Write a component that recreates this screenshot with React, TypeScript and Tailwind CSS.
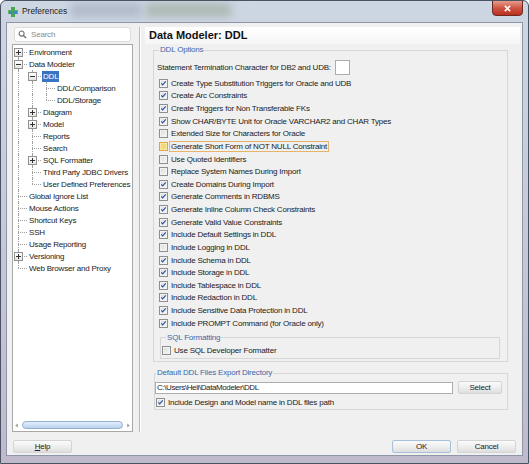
import React from 'react'

type Cell = 'pass' | 'none'
interface TreeRow {
  label: string
  anc: Cell[]
  last?: boolean
  first?: boolean
  exp?: '+' | '-'
  sel?: boolean
}

const tree: TreeRow[] = [
  { label: 'Environment', anc: [], exp: '+', first: true },
  { label: 'Data Modeler', anc: [], exp: '-' },
  { label: 'DDL', anc: ['pass'], exp: '-', sel: true },
  { label: 'DDL/Comparison', anc: ['pass', 'pass'] },
  { label: 'DDL/Storage', anc: ['pass', 'pass'], last: true },
  { label: 'Diagram', anc: ['pass'], exp: '+' },
  { label: 'Model', anc: ['pass'], exp: '+' },
  { label: 'Reports', anc: ['pass'] },
  { label: 'Search', anc: ['pass'] },
  { label: 'SQL Formatter', anc: ['pass'], exp: '+' },
  { label: 'Third Party JDBC Drivers', anc: ['pass'] },
  { label: 'User Defined Preferences', anc: ['pass'], last: true },
  { label: 'Global Ignore List', anc: [] },
  { label: 'Mouse Actions', anc: [] },
  { label: 'Shortcut Keys', anc: [] },
  { label: 'SSH', anc: [] },
  { label: 'Usage Reporting', anc: [] },
  { label: 'Versioning', anc: [], exp: '+' },
  { label: 'Web Browser and Proxy', anc: [], last: true },
]

const options: { label: string; checked?: boolean; focus?: boolean }[] = [
  { label: 'Create Type Substitution Triggers for Oracle and UDB', checked: true },
  { label: 'Create Arc Constraints', checked: true },
  { label: 'Create Triggers for Non Transferable FKs', checked: true },
  { label: 'Show CHAR/BYTE Unit for Oracle VARCHAR2 and CHAR Types', checked: true },
  { label: 'Extended Size for Characters for Oracle' },
  { label: 'Generate Short Form of NOT NULL Constraint', focus: true },
  { label: 'Use Quoted Identifiers' },
  { label: 'Replace System Names During Import' },
  { label: 'Create Domains During Import', checked: true },
  { label: 'Generate Comments in RDBMS', checked: true },
  { label: 'Generate Inline Column Check Constraints', checked: true },
  { label: 'Generate Valid Value Constraints', checked: true },
  { label: 'Include Default Settings in DDL', checked: true },
  { label: 'Include Logging in DDL' },
  { label: 'Include Schema in DDL', checked: true },
  { label: 'Include Storage in DDL', checked: true },
  { label: 'Include Tablespace in DDL', checked: true },
  { label: 'Include Redaction in DDL', checked: true },
  { label: 'Include Sensitive Data Protection in DDL', checked: true },
  { label: 'Include PROMPT Command (for Oracle only)', checked: true },
]

function Box({ checked, focus }: { checked?: boolean; focus?: boolean }) {
  return (
    <span
      className={
        focus
          ? 'flex h-[9px] w-[9px] shrink-0 items-center justify-center border border-[#e0a53e] bg-[#f7d676] shadow-[inset_0_0_0_1px_#fbe7a8]'
          : 'flex h-[9px] w-[9px] shrink-0 items-center justify-center border border-[#8e8f8f] bg-gradient-to-br from-[#d9d9d9] to-[#fafafa] shadow-[inset_0_0_0_1px_#f2f2f2]'
      }
    >
      {checked && (
        <svg viewBox="0 0 9 9" className="h-[7px] w-[7px]">
          <path d="M1.6 4.3 L3.5 6.3 L7.4 1.9" fill="none" stroke="#2a52a0" strokeWidth="1.5" />
        </svg>
      )}
    </span>
  )
}

function Check({ label, checked, focus }: { label: string; checked?: boolean; focus?: boolean }) {
  return (
    <div className="flex h-[12.63px] items-center gap-[1px]">
      <Box checked={checked} focus={focus} />
      <span
        className={
          focus
            ? 'border border-[#e6b46a] px-[1px] leading-[9px] whitespace-nowrap'
            : 'border border-transparent px-[1px] leading-[9px] whitespace-nowrap'
        }
      >
        {label}
      </span>
    </div>
  )
}

function Button({ label, def, className }: { label: React.ReactNode; def?: boolean; className: string }) {
  return (
    <div
      className={`flex h-[13px] items-center justify-center rounded-[2px] border bg-gradient-to-b from-[#fbfbfb] via-[#efefef] to-[#dedede] text-[#222] ${
        def ? 'border-[#a9c0da]' : 'border-[#d4d4d4]'
      } ${className}`}
    >
      {label}
    </div>
  )
}

function TreeLine({ row }: { row: TreeRow }) {
  return (
    <div className="flex h-[12px] items-center">
      {row.anc.map((c, i) => (
        <span key={i} className="relative h-full w-[14px] shrink-0">
          {c === 'pass' && <span className="absolute left-[5px] top-0 h-full border-l border-dotted border-[#a0a0a0]" />}
        </span>
      ))}
      <span className="relative h-full w-[14px] shrink-0">
        <span
          className={`absolute left-[5px] border-l border-dotted border-[#a0a0a0] ${
            row.first ? 'top-[6px] h-[6px]' : row.last ? 'top-0 h-[6px]' : 'top-0 h-full'
          }`}
        />
        <span className="absolute left-[5px] top-[6px] w-[9px] border-t border-dotted border-[#a0a0a0]" />
        {row.exp && (
          <span className="absolute left-[1px] top-[2px] flex h-[9px] w-[9px] items-center justify-center border border-[#919191] bg-gradient-to-b from-white to-[#e4e4e4]">
            <span className="absolute h-[1px] w-[5px] bg-[#333]" />
            {row.exp === '+' && <span className="absolute h-[5px] w-[1px] bg-[#333]" />}
          </span>
        )}
      </span>
      <span
        className={`ml-[1px] whitespace-nowrap px-[1px] leading-[11px] ${
          row.sel ? 'bg-[#3874c4] text-white' : ''
        }`}
      >
        {row.label}
      </span>
    </div>
  )
}

export default function App() {
  return (
    <div className="relative flex h-[464px] w-[529px] flex-col overflow-hidden rounded-t-[6px] border border-[#4a5264] bg-gradient-to-b from-[#cdd6e3] via-[#c6c9d8] to-[#bfbacb] font-['Liberation_Sans',Arial,sans-serif] text-[8px] tracking-[-0.2px] text-[#1b1b1b]">
      {/* Title bar */}
      <div className="relative flex h-[21px] shrink-0 items-center">
        <div className="absolute left-[70px] top-[2px] h-[14px] w-[70px] bg-[#9fa9b9] opacity-60 blur-[4px]" />
        <div className="absolute left-[145px] top-[2px] h-[14px] w-[85px] bg-[#98a896] opacity-60 blur-[4px]" />
        <svg viewBox="0 0 12 12" className="relative ml-[6px] h-[12px] w-[12px]">
          <rect x="1" y="4" width="10" height="4" fill="#5cb85c" />
          <rect x="4" y="1" width="4" height="10" fill="#4aa64a" />
          <rect x="2" y="5" width="3" height="3" fill="#3a84c9" />
          <rect x="7" y="5" width="3" height="3" fill="#3a84c9" />
        </svg>
        <span className="relative ml-[3px] text-[8.4px] tracking-normal text-[#1a1a1a]">Preferences</span>
        <div className="absolute right-[5px] top-[-1px] flex h-[16px] w-[31px] items-center justify-center rounded-b-[4px] border border-[#6e2a22] bg-gradient-to-b from-[#e59a8c] via-[#cf5443] to-[#b8301e]">
          <svg viewBox="0 0 10 8" className="h-[7px] w-[9px]">
            <path d="M2 1 L8 7 M8 1 L2 7" stroke="white" strokeWidth="1.8" />
          </svg>
        </div>
      </div>

      {/* Client area */}
      <div className="mx-[5px] mb-[7px] flex flex-1 flex-col border border-[#8d97a8] bg-[#f0f0f0]">
        <div className="flex h-[409px] pt-[4px]">
          {/* Left column */}
          <div className="ml-[5px] flex w-[121px] flex-col">
            <div className="mx-[2px] flex h-[15px] items-center rounded-[3px] border border-[#dcdcdc] bg-white">
              <svg viewBox="0 0 10 10" className="ml-[3px] h-[9px] w-[9px]">
                <circle cx="4" cy="4" r="2.8" fill="none" stroke="#6a6a6a" strokeWidth="1.2" />
                <path d="M6 6 L9 9" stroke="#6a6a6a" strokeWidth="1.5" />
              </svg>
              <span className="ml-[4px] text-[#8a8a8a]">Search</span>
            </div>
            <div className="mt-[2px] flex flex-1 flex-col border border-[#a8a8a8] bg-white">
              <div className="flex-1 pt-[1px]">
                {tree.map((r, i) => (
                  <TreeLine key={i} row={r} />
                ))}
              </div>
              <div className="mb-[1px] flex h-[10px] items-center px-[1px]">
                <svg viewBox="0 0 6 6" className="h-[5px] w-[5px]">
                  <path d="M4.5 0.5 L1.5 3 L4.5 5.5 Z" fill="#9a9a9a" />
                </svg>
                <div className="mx-[3px] h-[8px] flex-1 rounded-full border border-[#93afd2] bg-gradient-to-b from-[#e3eefb] to-[#bcd3ee]" />
                <svg viewBox="0 0 6 6" className="h-[5px] w-[5px]">
                  <path d="M1.5 0.5 L4.5 3 L1.5 5.5 Z" fill="#9a9a9a" />
                </svg>
              </div>
            </div>
          </div>

          {/* Splitter */}
          <div className="flex w-[12px] justify-center">
            <div className="h-full w-[1px] border-l border-[#b9b9b9] shadow-[1px_0_0_#ffffff]" />
          </div>

          {/* Right panel */}
          <div className="flex w-[375px] flex-col">
            <div className="flex h-[17px] items-center bg-gradient-to-b from-white to-[#f6f6f6] pl-[4px] text-[11px] font-bold tracking-normal text-[#111]">
              Data Modeler: DDL
            </div>

            <fieldset className="ml-[8px] mt-[1px] w-[355px] border border-[#d7d7d7] px-[3px] pb-[2px]">
              <legend className="ml-[2px] px-[1px] leading-[10px] text-[#3e68aa]">DDL Options</legend>
              <div className="mt-[5px] flex h-[15px] items-center">
                <span className="whitespace-nowrap">Statement Termination Character for DB2 and UDB:</span>
                <span className="ml-[4px] h-[15px] w-[15px] border border-[#abadb3] bg-white" />
              </div>
              <div className="mt-[2px] pl-[2px]">
                {options.map((o) => (
                  <Check key={o.label} {...o} />
                ))}
              </div>
              <fieldset className="ml-[3px] mt-[3px] w-[340px] border border-[#d7d7d7] px-[1px] pb-[1px]">
                <legend className="ml-[4px] px-[1px] leading-[10px] text-[#3e68aa]">SQL Formatting</legend>
                <div className="mt-[2px]">
                  <Check label="Use SQL Developer Formatter" />
                </div>
              </fieldset>
            </fieldset>

            <fieldset className="ml-[9px] mt-[6px] w-[354px] border border-[#d7d7d7] px-[0px] pb-[0px]">
              <legend className="ml-[1px] px-[1px] leading-[10px] text-[#3e68aa]">Default DDL Files Export Directory</legend>
              <div className="mt-[3px] flex items-center">
                <div className="flex h-[12px] w-[298px] items-center border border-[#abadb3] bg-white pl-[1px] tracking-[-0.4px]">
                  C:\Users\Heli\DataModeler\DDL
                </div>
                <Button label="Select" className="ml-[5px] w-[44px]" />
              </div>
              <div className="mt-[2px] pl-[1px]">
                <Check label="Include Design and Model name in DDL files path" checked />
              </div>
            </fieldset>
          </div>
        </div>

        {/* Buttons */}
        <div className="mt-[8px] flex items-center px-[6px]">
          <Button
            label={
              <span>
                <span className="underline">H</span>elp
              </span>
            }
            className="w-[59px]"
          />
          <div className="flex-1" />
          <Button label="OK" def className="w-[59px]" />
          <Button label="Cancel" className="ml-[6px] w-[59px]" />
        </div>
      </div>
    </div>
  )
}
